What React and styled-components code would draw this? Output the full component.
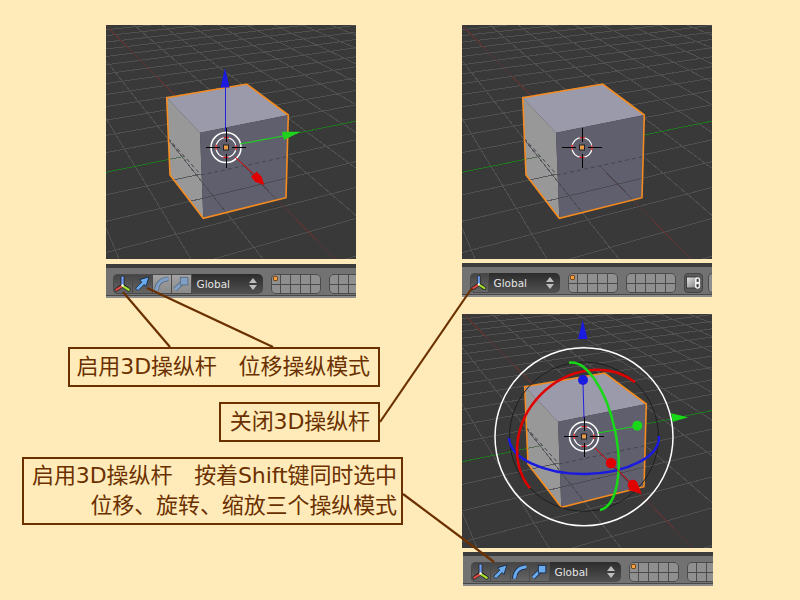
import React from "react";
import styled, { createGlobalStyle } from "styled-components";

const GlobalStyle=createGlobalStyle`
    html,body{
        margin: 0;
        padding: 0;
        background-color: #ffebb9;
    }
`
const Page=styled.div`
    position: relative;
    display: flex;
    flex-direction: row;
    align-items: flex-start;
    width: 800px;
    height: 600px;
    box-sizing: border-box;
    padding: 25px 0 0 21px;
    font-family: "DejaVu Sans", "Noto Sans CJK SC", sans-serif;
    overflow: hidden;
`
const LeftColumn=styled.div`
    display: flex;
    flex-direction: column;
    align-items: flex-end;
    width: 382px;
    flex-shrink: 0;
`
const RightColumn=styled.div`
    display: flex;
    flex-direction: column;
    gap: 17px;
    margin-left: 59px;
`
const Figure=styled.div`
    display: flex;
    flex-direction: column;
    gap: ${(p)=>p.$gap}px;
    width: 250px;
    margin-right: ${(p)=>p.$right || 0}px;
`
const Labels=styled.div`
    display: flex;
    flex-direction: column;
    align-items: flex-end;
    gap: 15px;
    margin-top: 49px;
    width: 100%;
`
const Label=styled.div`
    box-sizing: border-box;
    border: 2px solid #6b3000;
    color: #6b3000;
    font-size: 22px;
    line-height: 30px;
    letter-spacing: -0.1px;
    padding: ${(p)=>p.$pad};
    margin-right: ${(p)=>p.$right || 0}px;
    text-align: right;
    white-space: nowrap;
`
const Viewport=styled.svg`
    display: block;
    width: 250px;
    height: 234px;
    background-color: #393939;
`
const Toolbar=styled.div`
    display: flex;
    flex-direction: row;
    align-items: center;
    gap: 8px;
    box-sizing: border-box;
    width: 250px;
    height: 34px;
    margin-left: ${(p)=>p.$shift || 0}px;
    padding: 2px 0 0 ${(p)=>p.$left}px;
    overflow: hidden;
    background: linear-gradient(#727272 0 27px, #474747 27px 28px, #8c8c8c 28px);
    border-top: 4px solid #3c3c3c;
`
const ButtonGroup=styled.div`
    display: flex;
    flex-direction: row;
    flex-shrink: 0;
`
const ModeButton=styled.div`
    box-sizing: border-box;
    width: ${(p)=>p.$width || 19.5}px;
    height: 20px;
    border: 1px solid #4a4a4a;
    border-left-width: ${(p)=>p.$first ? 1 : 0}px;
    border-radius: ${(p)=>p.$first ? "4px 0 0 4px" : "0"};
    background: ${(p)=>p.$on ? "linear-gradient(#454545, #666666)" : "linear-gradient(#a2a2a2, #8b8b8b)"};
    & svg{
        display: block;
        width: 100%;
        height: 100%;
    }
`
const Dropdown=styled.div`
    display: flex;
    flex-direction: row;
    align-items: center;
    justify-content: space-between;
    box-sizing: border-box;
    width: 71px;
    height: 20px;
    flex-shrink: 0;
    margin-left: -8px;
    padding: 0 6px 0 5px;
    border-radius: 0 5px 5px 0;
    background: linear-gradient(#2c2c2c, #515151);
    color: #e4e4e4;
    font-size: 10.5px;
`
const Spinner=styled.span`
    display: flex;
    flex-direction: column;
    gap: 2px;
    &::before,&::after{
        content: "";
        border-left: 4px solid transparent;
        border-right: 4px solid transparent;
    }
    &::before{
        border-bottom: 5px solid #bdbdbd;
    }
    &::after{
        border-top: 5px solid #bdbdbd;
    }
`
const LayerGrid=styled.div`
    position: relative;
    display: grid;
    grid-template-columns: repeat(5, 1fr);
    grid-template-rows: repeat(2, 1fr);
    gap: 1px;
    box-sizing: border-box;
    width: 50px;
    height: 20px;
    flex-shrink: 0;
    overflow: hidden;
    border: 1px solid #4c4c4c;
    border-radius: 5px;
    background-color: #4c4c4c;
`
const LayerCell=styled.span`
    background-color: #8f8f8f;
`
const LayerDot=styled.span`
    position: absolute;
    top: 1px;
    left: 1px;
    box-sizing: border-box;
    width: 5px;
    height: 5px;
    border-radius: 1px;
    border: 1px solid #7a4a18;
    background-color: #f7a043;
`
const IconButton=styled.div`
    box-sizing: border-box;
    width: 19px;
    height: 20px;
    flex-shrink: 0;
    border: 1px solid #444;
    border-radius: 4px;
    background-color: #5c5c5c;
    & svg{
        display: block;
        width: 100%;
        height: 100%;
    }
`
const StubButton=styled.div`
    box-sizing: border-box;
    width: 19px;
    height: 20px;
    flex-shrink: 0;
    margin-left: -3px;
    border: 1px solid #4c4c4c;
    border-radius: 4px;
    background-color: #8f8f8f;
`
const Leaders=styled.svg`
    position: absolute;
    top: 0;
    left: 0;
    width: 800px;
    height: 600px;
    pointer-events: none;
`

// ground plane homography, fitted from the two vanishing points of the cube edges
const VX=[-147,-150];
const VY=[1450,-150];
const ORIGIN=[120,122.7];
const A=0.059;
const B=0.032;
const project=(u,v)=>{
    const w=A*u+B*v+1;
    return [
        ((A*u*VX[0]+B*v*VY[0]+ORIGIN[0])/w).toFixed(1),
        ((A*u*VX[1]+B*v*VY[1]+ORIGIN[1])/w).toFixed(1),
    ];
}
const gridLine=(u1,v1,u2,v2)=>{
    const p=project(u1,v1);
    const q=project(u2,v2);
    return `M${p[0]} ${p[1]}L${q[0]} ${q[1]}`;
}
const range=[];
for(let i=-15;i<=15;i++){
    if(i!==0) range.push(i);
}
const GRID=range.map((i)=>gridLine(i,-15,i,15)+gridLine(-15,i,15,i)).join("");
const RED_AXIS=gridLine(-15,0,15,0);
const GREEN_AXIS=gridLine(0,-15,0,15);

const LOWER="62,113 95,150 180.7,131.7 180,172.7 97.3,193.3 64,150";

const GroundLines=({grid,red,green})=>(
    <g fill="none" strokeWidth="1" shapeRendering="crispEdges">
        <path d={GRID} stroke={grid}/>
        <path d={RED_AXIS} stroke={red}/>
        <path d={GREEN_AXIS} stroke={green}/>
    </g>
)

const Cube=({name})=>(
    <g>
        <polygon points="60.7,72.7 140.7,59 182.3,90 94,107.7" fill="#9b9aaa"/>
        <polygon points="60.7,72.7 94,107.7 97.3,193.3 64,150" fill="#989898"/>
        <polygon points="94,107.7 182.3,90 180,172.7 97.3,193.3" fill="#5f5f6e"/>
        <clipPath id={`lower-${name}`}>
            <polygon points={LOWER}/>
        </clipPath>
        <g clipPath={`url(#lower-${name})`} opacity="0.75">
            <GroundLines grid="#45454c" red="#4d3e46" green="#3f5f3f"/>
        </g>
        <polyline points="62,113 95,150 180.7,131.7" fill="none" stroke="#46464c" strokeWidth="1" strokeDasharray="4 3"/>
        <polygon points="60.7,72.7 140.7,59 182.3,90 180,172.7 97.3,193.3 64,150" fill="none" stroke="#f58b1f" strokeWidth="1.6"/>
    </g>
)

const Cursor=({x,y,ring})=>(
    <g fill="none">
        {ring && <circle cx={x} cy={y} r={ring} stroke="#fff" strokeWidth="1.5"/>}
        <circle cx={x} cy={y} r="10" stroke="#fff" strokeWidth="1.2"/>
        <circle cx={x} cy={y} r="10" stroke="#e00000" strokeWidth="1.2" strokeDasharray="5.2 10.5" strokeDashoffset="2.6"/>
        <path d={`M${x-20} ${y}H${x-6}M${x+6} ${y}H${x+20}M${x} ${y-20}V${y-6}M${x} ${y+6}V${y+20}`} stroke="#000" strokeWidth="1" shapeRendering="crispEdges"/>
        <rect x={x-2.5} y={y-2.5} width="5" height="5" fill="#e89a4a" stroke="#222" strokeWidth="1"/>
    </g>
)

const MoveWidget=()=>(
    <g>
        <path d="M119.5 62V106" stroke="#2222dd" strokeWidth="1"/>
        <polygon points="119,43 114.5,62.5 123.5,62.5" fill="#1a1ae0"/>
        <path d="M134 119L177 111" stroke="#1ed21e" strokeWidth="1.2"/>
        <polygon points="175.7,106.7 194.7,106.7 178,115" fill="#1ed21e"/>
        <path d="M129 132L151 152" stroke="#e00000" strokeWidth="1"/>
        <polygon points="150.7,146.7 155.7,151.7 158.3,160 149,156.7 145,151.7" fill="#e00000"/>
    </g>
)

const AllWidget=()=>(
    <g fill="none">
        <circle cx="122" cy="122.7" r="89" stroke="#fff" strokeWidth="1.5"/>
        <circle cx="122" cy="122.7" r="74.5" stroke="#1e1e1e" strokeWidth="1"/>
        <path d="M47 124A75 37 0 0 0 197 122" stroke="#1a1ae0" strokeWidth="2.5"/>
        <path d="M173 68.3A75 65 -45 0 0 68 174.3" stroke="#e00000" strokeWidth="2.5"/>
        <path d="M107 48.7A75 31 78 0 1 138 196" stroke="#18d818" strokeWidth="2.5"/>
        <path d="M121 69L122 104" stroke="#2222dd" strokeWidth="1"/>
        <circle cx="121" cy="66" r="5" fill="#1a1ae0"/>
        <polygon points="120.7,6 116,25 125.5,25" fill="#1a1ae0"/>
        <path d="M136 119L175 112" stroke="#18d818" strokeWidth="1"/>
        <circle cx="175.3" cy="111.7" r="5" fill="#18d818"/>
        <polygon points="209,99.3 226.3,103.3 210.7,107.7" fill="#18d818"/>
        <path d="M133 134L171 171" stroke="#e00000" strokeWidth="1"/>
        <circle cx="149" cy="149" r="5.2" fill="#e00000"/>
        <circle cx="170.7" cy="170.7" r="5" fill="#e00000"/>
        <polygon points="166,176 175,168 179.7,180" fill="#e00000"/>
    </g>
)

const Scene=({name,shift,ring,children})=>(
    <Viewport viewBox="0 0 250 234">
        <g transform={`translate(${shift || 0} 0)`}>
            <GroundLines grid="#505050" red="#5c3434" green="#21771f"/>
            <Cube name={name}/>
            <Cursor x={120} y={122.5} ring={ring}/>
        </g>
        {children}
    </Viewport>
)

const AxisIcon=()=>(
    <svg viewBox="0 0 19 19" fill="none" strokeLinecap="round">
        <path d="M9 11V2.5M9 11L2.5 15.5M9 11L15.5 15.5" stroke="#222" strokeWidth="4"/>
        <path d="M9 10.5V2.5" stroke="#6a9cf5" strokeWidth="2.4"/>
        <path d="M9 11.5L2.5 15.5" stroke="#e04a44" strokeWidth="2.4"/>
        <path d="M9 11.5L15.5 15.5" stroke="#a6e22e" strokeWidth="2.4"/>
        <circle cx="9" cy="11" r="1.2" fill="#fff"/>
    </svg>
)

const MoveIcon=({on})=>(
    <svg viewBox="0 0 19 19">
        <path d="M2.5 14L9 7.5L6.5 5L16.5 2L13.5 12L11.5 10L5 16.5Z" fill={on ? "#68abee" : "#7fa0c6"} stroke={on ? "#1b2b4a" : "#5c6d82"} strokeWidth="1"/>
    </svg>
)

const RotateIcon=({on})=>(
    <svg viewBox="0 0 19 19" fill="none">
        <path d="M3.5 16.5C3.5 9 8.5 4.5 16 4" stroke={on ? "#1b2b4a" : "#5c6d82"} strokeWidth="5"/>
        <path d="M3.5 16.5C3.5 9 8.5 4.5 16 4" stroke={on ? "#68abee" : "#7fa0c6"} strokeWidth="3.2"/>
    </svg>
)

const ScaleIcon=({on})=>(
    <svg viewBox="0 0 19 19" fill="none">
        <path d="M3 15.5L10 8.5" stroke={on ? "#1b2b4a" : "#5c6d82"} strokeWidth="5"/>
        <path d="M3 15.5L10 8.5" stroke={on ? "#68abee" : "#7fa0c6"} strokeWidth="3.2"/>
        <rect x="8.5" y="2.5" width="8" height="8" fill={on ? "#68abee" : "#7fa0c6"} stroke={on ? "#1b2b4a" : "#5c6d82"} strokeWidth="1"/>
    </svg>
)

const LinkIcon=()=>(
    <svg viewBox="0 0 17 18" fill="none">
        <defs>
            <linearGradient id="link-face" x1="0" y1="0" x2="1" y2="1">
                <stop offset="0" stopColor="#e8e8e8"/>
                <stop offset="1" stopColor="#777"/>
            </linearGradient>
        </defs>
        <rect x="1.5" y="3" width="11" height="11" fill="url(#link-face)" stroke="#2c2c2c" strokeWidth="0.8"/>
        <rect x="10.5" y="4" width="4" height="5.5" rx="2" stroke="#f0f0f0" strokeWidth="1.3"/>
        <rect x="10.5" y="8.5" width="4" height="5.5" rx="2" stroke="#f0f0f0" strokeWidth="1.3"/>
    </svg>
)

const Layers=({active})=>(
    <LayerGrid>
        {Array.from({length:10},(_,i)=><LayerCell key={i}/>)}
        {active && <LayerDot/>}
    </LayerGrid>
)

const GlobalSelect=()=>(
    <Dropdown>
        Global
        <Spinner/>
    </Dropdown>
)

const ModeBar=({left,shift,move,rest,children})=>(
    <Toolbar $left={left} $shift={shift}>
        <ButtonGroup>
            <ModeButton $first $on $width={move===undefined ? 18.5 : 20}><AxisIcon/></ModeButton>
            {move!==undefined && <ModeButton $on={move}><MoveIcon on={move}/></ModeButton>}
            {rest!==undefined && <ModeButton $on={rest}><RotateIcon on={rest}/></ModeButton>}
            {rest!==undefined && <ModeButton $on={rest}><ScaleIcon on={rest}/></ModeButton>}
        </ButtonGroup>
        <GlobalSelect/>
        <Layers active/>
        <Layers/>
        {children}
    </Toolbar>
)

const App=()=>{
    return(
        <Page>
            <GlobalStyle/>
            <LeftColumn>
                <Figure $gap={5} $right={47}>
                    <Scene name="a" ring={15}>
                        <MoveWidget/>
                    </Scene>
                    <ModeBar left={7} move={true} rest={false}/>
                </Figure>
                <Labels>
                    <Label $right={23} $pad="3px 8px 3px 6.5px">启用3D操纵杆　位移操纵模式</Label>
                    <Label $right={23} $pad="3px 8px 3px 8.5px">关闭3D操纵杆</Label>
                    <Label $pad="2px 4px 2px 8.5px">
                        启用3D操纵杆　按着Shift键同时选中<br/>
                        位移、旋转、缩放三个操纵模式
                    </Label>
                </Labels>
            </LeftColumn>
            <RightColumn>
                <Figure $gap={4}>
                    <Scene name="b"/>
                    <ModeBar left={8}>
                        <IconButton><LinkIcon/></IconButton>
                        <StubButton/>
                    </ModeBar>
                </Figure>
                <Figure $gap={4}>
                    <Scene name="c" shift={2} ring={14.5}>
                        <AllWidget/>
                    </Scene>
                    <ModeBar left={8} shift={1} move={true} rest={true}/>
                </Figure>
            </RightColumn>
            <Leaders viewBox="0 0 800 600" fill="none" stroke="#6b3000" strokeWidth="2.2">
                <path d="M123 292L170 347"/>
                <path d="M147 288L273 347"/>
                <path d="M380 422L472 288"/>
                <path d="M403 494L494 562"/>
            </Leaders>
        </Page>
    )
}
export default App;
